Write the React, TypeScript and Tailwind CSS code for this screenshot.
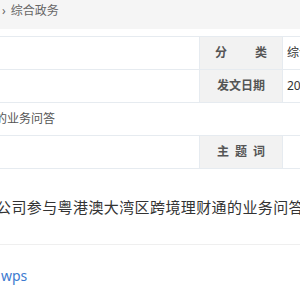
export default function App() {
  return (
    <div className="w-[300px] h-[300px] overflow-hidden bg-white font-['Noto_Sans','Noto_Sans_CJK_SC',sans-serif]">
      {/* breadcrumb */}
      <div className="h-[29px] bg-[#f5f5f5] pt-[3px] pl-[2px] flex items-start text-[12px] leading-[16px] text-[#666] whitespace-nowrap">
        <span className="mr-[5px]">›</span>
        <span>综合政务</span>
      </div>

      {/* info table */}
      <div className="mt-[7px] w-[300px] border-t border-[#e6ebf0] text-[12px] text-[#555]">
        <div className="flex h-[33px] border-b border-[#e6ebf0]">
          <div className="w-[200px] shrink-0 border-r border-[#e6ebf0]" />
          <div className="w-[83px] shrink-0 bg-[#f2f2f2] border-r border-[#e6ebf0] flex items-center justify-center gap-[28px] font-bold">
            <span>分</span>
            <span>类</span>
          </div>
          <div className="w-[17px] shrink-0 overflow-hidden flex items-center pl-[4px] text-[#333] whitespace-nowrap">综合政务</div>
        </div>
        <div className="flex h-[33px] border-b border-[#e6ebf0]">
          <div className="w-[200px] shrink-0 border-r border-[#e6ebf0]" />
          <div className="w-[83px] shrink-0 bg-[#f2f2f2] border-r border-[#e6ebf0] flex items-center justify-center font-bold">
            发文日期
          </div>
          <div className="w-[17px] shrink-0 overflow-hidden flex items-center pl-[4px] text-[#333] whitespace-nowrap">2023-01-01</div>
        </div>
        <div className="flex items-center h-[33px] border-b border-[#e6ebf0] whitespace-nowrap">
          <span className="-ml-[41px]">理财通的业务问答</span>
        </div>
        <div className="flex h-[33px] border-b border-[#e6ebf0]">
          <div className="w-[200px] shrink-0 border-r border-[#e6ebf0]" />
          <div className="w-[83px] shrink-0 bg-[#f2f2f2] border-r border-[#e6ebf0] flex items-center justify-center gap-[6px] font-bold">
            <span>主</span>
            <span>题</span>
            <span>词</span>
          </div>
          <div className="flex-1" />
        </div>
      </div>

      {/* title */}
      <div className="mt-[28px] -ml-[4px] whitespace-nowrap text-[15px] leading-[20px] tracking-[0.4px] text-[#333]">
        公司参与粤港澳大湾区跨境理财通的业务问答
      </div>

      {/* divider */}
      <div className="mt-[27px] h-px bg-[#efefef]" />

      {/* attachment */}
      <div className="mt-[22px] pl-[1px] text-[14px] leading-[18px] text-[#3d7bd0] whitespace-nowrap">wps</div>
    </div>
  );
}
